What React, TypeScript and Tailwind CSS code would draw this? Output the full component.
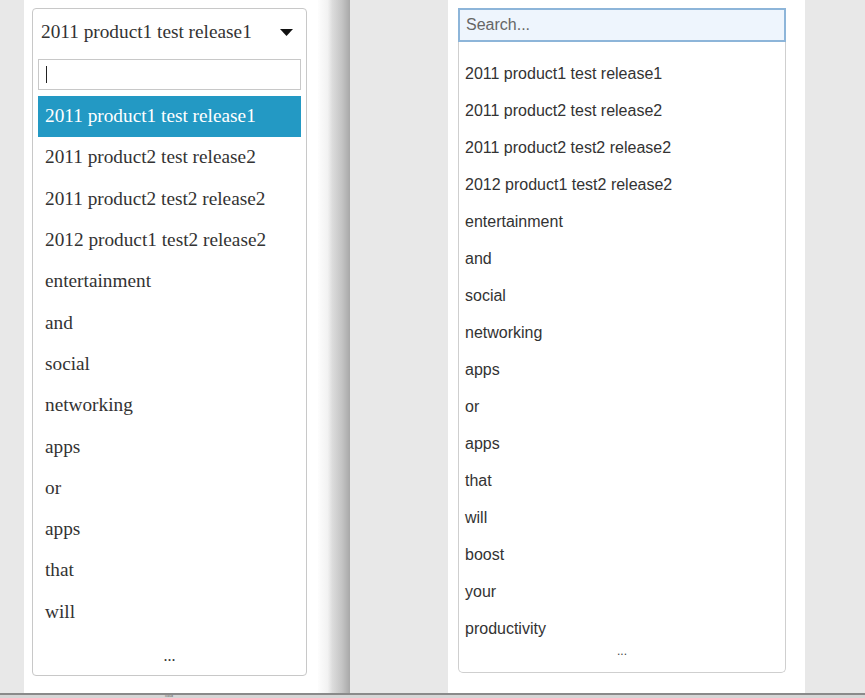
const leftItems = [
  "2011 product2 test release2",
  "2011 product2 test2 release2",
  "2012 product1 test2 release2",
  "entertainment",
  "and",
  "social",
  "networking",
  "apps",
  "or",
  "apps",
  "that",
  "will",
];

const rightItems = [
  "2011 product1 test release1",
  "2011 product2 test release2",
  "2011 product2 test2 release2",
  "2012 product1 test2 release2",
  "entertainment",
  "and",
  "social",
  "networking",
  "apps",
  "or",
  "apps",
  "that",
  "will",
  "boost",
  "your",
  "productivity",
];

const serif = "font-['Liberation_Serif','Times_New_Roman',serif]";
const sans = "font-['Liberation_Sans',Arial,sans-serif]";

function SerifSelect() {
  return (
    <div className={`mt-2 ml-2 w-[275px] h-[668px] flex flex-col border border-[#c8c8c8] rounded-[4px] bg-white ${serif}`}>
      <div className="h-[44px] mt-px flex items-center justify-between pl-2 pr-[13px] text-[19.3px] text-[#333]">
        <span>2011 product1 test release1</span>
        <svg width="13" height="7" viewBox="0 0 13 7">
          <path d="M0 0 L13 0 L6.5 7 Z" fill="#111" />
        </svg>
      </div>
      <div className="mx-[5px] mt-[5px] h-[31px] border border-[#c8c8c8] flex items-center pl-[7px]">
        <div className="w-px h-[17px] bg-[#222]" />
      </div>
      <div className="mx-[5px] mt-[6px] h-[41.3px] bg-[#2399c4] text-white text-[19.3px] flex items-center pl-[7px]">
        2011 product1 test release1
      </div>
      {leftItems.map((t, i) => (
        <div key={i} className="h-[41.3px] flex items-center pl-[12px] text-[19.3px] text-[#333]">
          {t}
        </div>
      ))}
      <div className="mt-[15px] text-center text-[16px] leading-none text-[#333]">...</div>
    </div>
  );
}

function SansSelect() {
  return (
    <div className={`mt-2 ml-[10px] w-[328px] flex flex-col ${sans}`}>
      <div className="h-[34px] border-2 border-[#8db5d9] bg-[#eef5fd] flex items-center pl-[6px] text-[16px] text-[#666]">
        Search...
      </div>
      <div className="h-[631px] border border-t-0 border-[#cfcfcf] rounded-b-[5px] bg-white pt-[13px] flex flex-col">
        {rightItems.map((t, i) => (
          <div key={i} className="h-[37.07px] shrink-0 flex items-center pl-[6px] text-[16px] text-[#333]">
            {t}
          </div>
        ))}
        <div className="-mt-[3px] text-center text-[12px] leading-none text-[#444]">...</div>
      </div>
    </div>
  );
}

export default function App() {
  return (
    <div className="w-[865px] h-[698px] overflow-hidden flex flex-col bg-[#e8e8e8]">
      <div className="h-[693px] flex">
        <div className="w-[24px] bg-[#e8e8e8]" />
        <div className="w-[294px] bg-white">
          <SerifSelect />
        </div>
        <div className="w-[32px] bg-[linear-gradient(to_right,#fdfdfd_0%,#f2f2f2_30%,#dcdcdc_45%,#c4c4c4_75%,#a8a8a8_100%)]" />
        <div className="flex-1 flex rounded-bl-[8px] overflow-hidden">
          <div className="w-[98px] bg-[#e8e8e8]" />
          <div className="w-[357px] bg-white">
            <SansSelect />
          </div>
          <div className="flex-1 bg-[#e8e8e8]" />
        </div>
      </div>
      <div className="h-[5px] flex items-start border-t-2 border-[#8a8a8a] bg-[#d6d6d6] overflow-hidden">
        <div className={`ml-[165px] text-[3px] leading-none text-[#555] ${sans}`}>icloud</div>
      </div>
    </div>
  );
}
